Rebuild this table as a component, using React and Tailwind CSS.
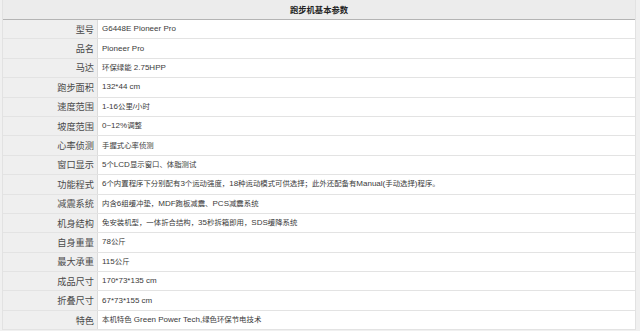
import React from "react";

const rows = [
  ["型号", "G6448E Pioneer Pro"],
  ["品名", "Pioneer Pro"],
  ["马达", "环保绿能 2.75HPP"],
  ["跑步面积", "132*44 cm"],
  ["速度范围", "1-16公里/小时"],
  ["坡度范围", "0~12%调整"],
  ["心率侦测", "手握式心率侦测"],
  ["窗口显示", "5个LCD显示窗口、体脂测试"],
  ["功能程式", "6个内置程序下分别配有3个运动强度，18种运动模式可供选择；此外还配备有Manual(手动选择)程序。"],
  ["减震系统", "内含6组缓冲垫，MDF跑板减震、PCS减震系统"],
  ["机身结构", "免安装机型，一体折合结构，35秒拆箱即用，SDS缓降系统"],
  ["自身重量", "78公斤"],
  ["最大承重", "115公斤"],
  ["成品尺寸", "170*73*135 cm"],
  ["折叠尺寸", "67*73*155 cm"],
  ["特色", "本机特色 Green Power Tech,绿色环保节电技术"],
];

const CJK = /([\u3000-\u303f\u4e00-\u9fff\uff00-\uffef]+)/;

function Runs({ text }) {
  const parts = text.split(CJK).filter(Boolean);
  return (
    <span className="text-[8px] leading-[10px]">
      {parts.map((p, i) =>
        /[\u3000-\u303f\u4e00-\u9fff\uff00-\uffef]/.test(p) ? (
          <span key={i} className="text-[7.4px]">{p}</span>
        ) : (
          <span key={i} className="text-[8px]">{p}</span>
        )
      )}
    </span>
  );
}

export default function App() {
  return (
    <div
      className="w-[640px] h-[331px] overflow-hidden bg-[#f0f0f0] pr-[4px] pl-[2px] text-[#3a3a3a]"
      style={{ fontFamily: '"Liberation Sans", "Noto Sans CJK SC", sans-serif' }}
    >
      <div className="w-full border-x border-[#e2e2e2]">
        <div className="h-[20px] flex items-center justify-center bg-[#ececec] border-b border-[#b4b4b4] text-[8.3px] leading-[10px] font-bold text-[#222]">
          跑步机基本参数
        </div>
        {rows.map(([k, v], i) => (
          <div
            key={i}
            className="grid grid-cols-[95px_1fr] h-[19.4px] overflow-hidden border-b border-[#e3e3e3] text-[8px] leading-[10px]"
          >
            <div
              className="flex items-center justify-end pr-[3px] bg-[#efefef] border-r border-[#dcdcdc] text-[9.2px] leading-[11px] text-[#4a4a4a] font-normal"
              style={{ fontFamily: '"Noto Sans CJK SC", sans-serif' }}
            >
              {k}
            </div>
            <div className="flex items-center pl-[4px] bg-white text-[#3a3a3a] whitespace-nowrap">
              <Runs text={v} />
            </div>
          </div>
        ))}
      </div>
    </div>
  );
}
